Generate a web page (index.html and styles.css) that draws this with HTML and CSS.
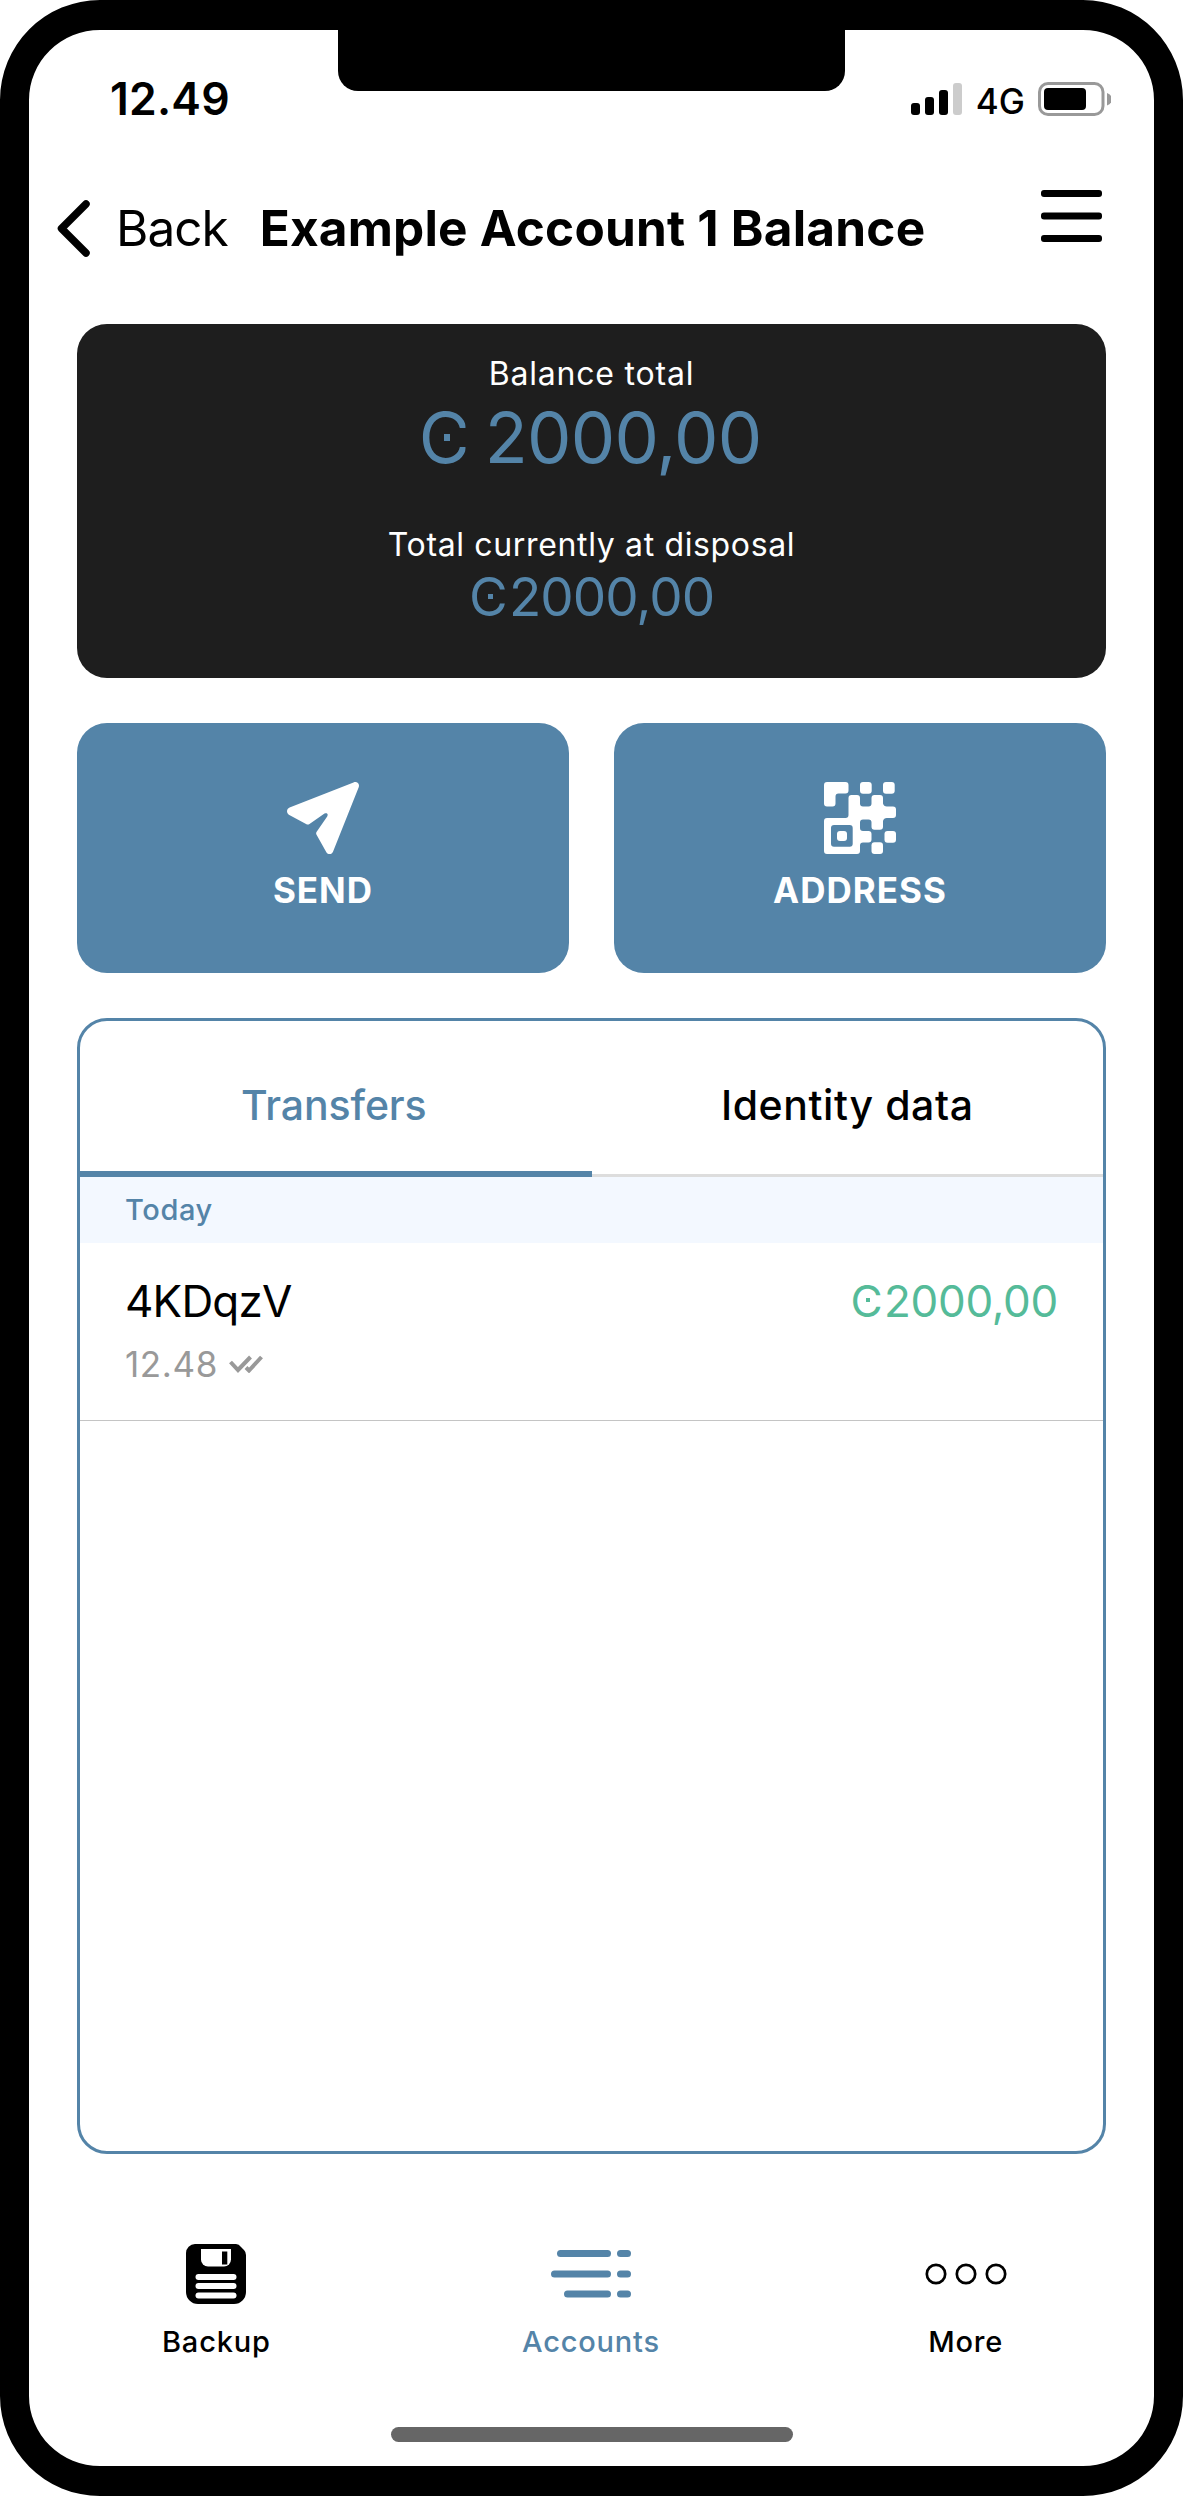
FILE: index.html
```html
<!DOCTYPE html>
<html lang="en">
<head>
<meta charset="utf-8">
<title>Example Account 1 Balance</title>
<link rel="stylesheet" href="styles.css">
</head>
<body>
<div class="phone">
  <div class="notch"></div>

  <div class="status">
    <span class="time">12.49</span>
    <div class="status-icons">
      <svg class="signal" width="51" height="32" viewBox="0 0 51 32">
        <rect x="0" y="20" width="9" height="12" rx="3"/>
        <rect x="14" y="14" width="9" height="18" rx="3"/>
        <rect x="28" y="7" width="9" height="25" rx="3"/>
        <rect x="42" y="0" width="9" height="32" rx="3" fill="#ccc"/>
      </svg>
      <span class="network">4G</span>
      <svg class="battery" width="73" height="34" viewBox="0 0 73 34">
        <rect x="1.5" y="1.5" width="63.5" height="31" rx="8.5" fill="none" stroke="#999" stroke-width="3"/>
        <rect x="6" y="6" width="42" height="22" rx="4"/>
        <path d="M69 11a6.5 6.5 0 0 1 0 12.5z" fill="#999"/>
      </svg>
    </div>
  </div>

  <header class="header">
    <svg class="chevron" width="33" height="57" viewBox="0 0 33 57">
      <path d="M29 4 4.500 28.500 29 53" fill="none" stroke="#000" stroke-width="7.500" stroke-linecap="round" stroke-linejoin="round"/>
    </svg>
    <span class="back">Back</span>
    <h1 class="title">Example Account 1 Balance</h1>
    <svg class="menu" width="61" height="52" viewBox="0 0 61 52">
      <rect width="61" height="7" rx="3"/>
      <rect y="22.500" width="61" height="7" rx="3"/>
      <rect y="45" width="61" height="7" rx="3"/>
    </svg>
  </header>

  <section class="balance">
    <span class="caption caption-total">Balance total</span>
    <span class="total"><span class="ccd">C</span> <span>2000,00</span></span>
    <span class="caption caption-disposal">Total currently at disposal</span>
    <span class="disposal"><span class="ccd">C</span><span class="digits">2000,00</span></span>
  </section>

  <div class="actions">
    <div class="action">
      <svg width="72" height="72" viewBox="0 0 72 72" fill="#fff">
        <path d="M66.500.400C70-.800 72.800 1.500 71.800 5L46 69.700C44.700 72.800 41 72.800 39.500 70.500L29.400 52.500Q28.800 51.300 29.500 50L40.200 34.500C41.500 32 40 30.300 37.500 31.600L22.500 42Q21 43 19.500 42.300L2.300 33C-1 31-.600 27 2.600 25.500Z"/>
      </svg>
      <span class="action-label">SEND</span>
    </div>
    <div class="action">
      <svg width="72" height="72" viewBox="0 0 72 72" fill="#fff">
        <path d="M3 0H21.500a3 3 0 0 1 3 3V8.500a3 3 0 0 1-3 3H14.500a3 3 0 0 0-3 3V21.500a3 3 0 0 1-3 3H3a3 3 0 0 1-3-3V3a3 3 0 0 1 3-3z"/>
        <rect x="36" width="11.700" height="11.700" rx="3"/>
        <rect x="59" width="11.700" height="11.700" rx="3"/>
        <rect x="60.500" y="49" width="11.500" height="11.700" rx="3"/>
        <rect x="47.500" y="60.300" width="11.500" height="11.700" rx="3"/>
        <path fill-rule="evenodd" d="M27.500 13H33a3 3 0 0 1 3 3V21.500a3 3 0 0 0 3 3H44.500a3 3 0 0 0 3-3V16a3 3 0 0 1 3-3H56a3 3 0 0 1 3 3V21.500a4 4 0 0 0 4 3H69a3 3 0 0 1 3 3V33a3 3 0 0 1-3 3H63a4 4 0 0 0-4 3V44.700a3 3 0 0 1-3 3H50.500a3 3 0 0 1-3-3V40.500a3 3 0 0 0-3-3H39a3 3 0 0 0-3 3V46a3 3 0 0 0 3 3H44.500a3 3 0 0 1 3 3V57.500a3 3 0 0 1-3 3H39a3 3 0 0 0-3 3V69a3 3 0 0 1-3 3H3a3 3 0 0 1-3-3V39a3 3 0 0 1 3-3H21.500a3 3 0 0 0 3-3V16a3 3 0 0 1 3-3zM10 43a3 3 0 0 0-3 3V61.700a3 3 0 0 0 3 3H25.700a3 3 0 0 0 3-3V46a3 3 0 0 0-3-3z"/>
        <rect x="13" y="49" width="10" height="10" rx="3"/>
      </svg>
      <span class="action-label">ADDRESS</span>
    </div>
  </div>

  <section class="panel">
    <div class="tabs">
      <div class="tab tab-active">Transfers</div>
      <div class="tab">Identity data</div>
    </div>
    <div class="day">Today</div>
    <div class="transfer">
      <div class="transfer-main">
        <span class="transfer-name">4KDqzV</span>
        <span class="transfer-amount"><span class="ccd">C</span><span class="digits">2000,00</span></span>
      </div>
      <div class="transfer-meta">
        <span>12.48</span>
        <svg class="checks" width="34" height="18" viewBox="0 0 34 18">
          <path d="M1.500 7 9 15 21.500 2M17 12.500 20 15.500 32.500 2" fill="none" stroke="#999" stroke-width="4"/>
        </svg>
      </div>
    </div>
  </section>

  <nav class="nav">
    <div class="nav-item">
      <svg width="60" height="60" viewBox="0 0 60 60">
        <path d="M9 0H50Q53 0 55 3L58 6Q60 8 60 11V48A12 12 0 0 1 48 60H12A12 12 0 0 1 0 48V9A9 9 0 0 1 9 0Z"/>
        <path d="M15 5H45V15.500a7 7 0 0 1-7 7H22a7 7 0 0 1-7-7Z" fill="#fff"/>
        <rect x="36" y="7.500" width="5.300" height="13"/>
        <g fill="#fff">
          <rect x="9.500" y="30" width="41" height="6" rx="3"/>
          <rect x="9.500" y="39" width="41" height="6" rx="3"/>
          <rect x="9.500" y="48.500" width="41" height="6" rx="3"/>
        </g>
      </svg>
      <span class="nav-label">Backup</span>
    </div>
    <div class="nav-item nav-item-active">
      <svg width="80" height="60" viewBox="0 0 80 60" fill="#5484a8">
        <rect x="6" y="6" width="54" height="7" rx="3.500"/>
        <rect x="0" y="26.500" width="60" height="7" rx="3.500"/>
        <rect x="13" y="46.500" width="47" height="7" rx="3.500"/>
        <rect x="66" y="6" width="14" height="7" rx="3.500"/>
        <rect x="66" y="26.500" width="14" height="7" rx="3.500"/>
        <rect x="66" y="46.500" width="14" height="7" rx="3.500"/>
      </svg>
      <span class="nav-label">Accounts</span>
    </div>
    <div class="nav-item">
      <svg width="82" height="60" viewBox="0 0 82 60" fill="none" stroke="#000" stroke-width="2.700">
        <circle cx="11" cy="30" r="9.200"/>
        <circle cx="41" cy="30" r="9.200"/>
        <circle cx="71" cy="30" r="9.200"/>
      </svg>
      <span class="nav-label">More</span>
    </div>
  </nav>
  <div class="home-bar"></div>
</div>
</body>
</html>
```

FILE: styles.css
```css
* {
  box-sizing: border-box;
}

body {
  margin: 0;
  background: #fff;
  color: #000;
  font-family: Inter, "Liberation Sans", sans-serif;
}

svg {
  display: block;
  flex: none;
}

.phone {
  position: relative;
  display: flex;
  flex-direction: column;
  width: 1183px;
  height: 2496px;
  border: solid #000;
  border-width: 30px 29px;
  border-radius: 100px;
  background: #fff;
}

.notch {
  position: absolute;
  top: -1px;
  left: 309px;
  width: 507px;
  height: 62px;
  border-radius: 0 0 20px 20px;
  background: #000;
}

.status {
  display: flex;
  align-items: center;
  justify-content: space-between;
  height: 138px;
  padding: 0 43px 0 81px;
}

.time {
  font-size: 44.5px;
  font-weight: 600;
  letter-spacing: 0.2px;
}

.status-icons {
  display: flex;
  align-items: center;
}

.network {
  margin-left: 14px;
  padding-top: 3px;
  font-size: 35px;
  font-weight: 450;
  line-height: 40px;
}

.battery {
  margin-left: 13px;
}

.header {
  display: flex;
  align-items: center;
  height: 120px;
  padding: 0 52px 0 28px;
  white-space: nowrap;
}

.back {
  margin-left: 26px;
  font-size: 49.5px;
  letter-spacing: -1px;
}

.title {
  margin: 0 auto 0 32px;
  font-size: 49.5px;
  font-weight: 700;
  letter-spacing: 0.21px;
}

.menu {
  align-self: flex-start;
  margin-top: 22px;
}

.balance {
  display: flex;
  flex-direction: column;
  align-items: center;
  height: 354px;
  margin: 36px 48px 0;
  padding-top: 30px;
  border-radius: 30px;
  background: #1e1e1e;
  color: #5484a8;
}

.caption {
  color: #fff;
  font-size: 32px;
  line-height: 40px;
}

.caption-total {
  letter-spacing: 0.8px;
}

.caption-disposal {
  margin-top: 43px;
  letter-spacing: 0.65px;
}

.total {
  margin-right: 3px;
  font-size: 70.5px;
  letter-spacing: -0.8px;
  line-height: 88px;
}

.total .ccd {
  margin-right: -3.5px;
  clip-path: inset(0 0.055em 0 0);
}

.disposal {
  font-size: 53px;
  line-height: 64px;
}

.disposal .ccd {
  margin-right: 1.4px;
}

.disposal .digits {
  letter-spacing: -1px;
}

/* Currency sign: a C with a square dot in its bowl */
.ccd {
  position: relative;
  display: inline-block;
  line-height: 1;
}

.ccd::after {
  content: "";
  position: absolute;
  left: 0.362em;
  top: 0.433em;
  width: 0.09em;
  height: 0.1em;
  background: currentColor;
}

.actions {
  display: flex;
  gap: 45px;
  margin: 45px 48px 0;
}

.action {
  display: flex;
  flex: 1;
  flex-direction: column;
  align-items: center;
  height: 250px;
  padding-top: 59px;
  border-radius: 30px;
  background: #5484a8;
}

.action-label {
  margin-top: 16px;
  color: #fff;
  font-size: 35px;
  font-weight: 700;
  letter-spacing: 1px;
  line-height: 40px;
}

.panel {
  height: 1136px;
  margin: 45px 48px 0;
  border: 3px solid #5484a8;
  border-radius: 30px;
}

.tabs {
  display: flex;
  height: 156px;
}

.tab {
  width: 50%;
  padding-top: 59px;
  border-bottom: 3px solid #ddd;
  font-size: 41px;
  font-weight: 500;
  letter-spacing: 0.6px;
  line-height: 50px;
  text-align: center;
}

.tab-active {
  padding-right: 4px;
  border-bottom: 6px solid #5484a8;
  color: #5484a8;
  letter-spacing: -0.1px;
}

.day {
  padding-left: 45px;
  background: #f3f8ff;
  color: #5484a8;
  font-size: 29px;
  font-weight: 500;
  letter-spacing: 0.6px;
  line-height: 66px;
}

.transfer {
  height: 178px;
  padding: 33px 45px 0;
  border-bottom: 1px solid #c4c4c4;
}

.transfer-main {
  display: flex;
  justify-content: space-between;
  height: 50px;
  font-size: 44px;
  line-height: 50px;
}

.transfer-name {
  letter-spacing: -0.8px;
}

.transfer-amount {
  color: #55bb99;
}

.transfer-amount .ccd {
  margin-right: 1.5px;
}

.transfer-amount .digits {
  letter-spacing: -0.3px;
}

.transfer-meta {
  display: flex;
  align-items: center;
  margin-top: 18px;
  color: #999;
  font-size: 35px;
  letter-spacing: 0.6px;
  line-height: 40px;
}

.checks {
  margin-left: 11px;
}

.nav {
  display: flex;
  padding: 90px 1px 0 0;
}

.nav-item {
  display: flex;
  flex: 1;
  flex-direction: column;
  align-items: center;
}

.nav-item-active {
  color: #5484a8;
}

.nav-label {
  margin-top: 18px;
  font-size: 29px;
  font-weight: 500;
  letter-spacing: 0.8px;
  line-height: 40px;
}

.home-bar {
  width: 402px;
  height: 15px;
  margin: auto auto 24px;
  border-radius: 8px;
  background: #666;
}
```
